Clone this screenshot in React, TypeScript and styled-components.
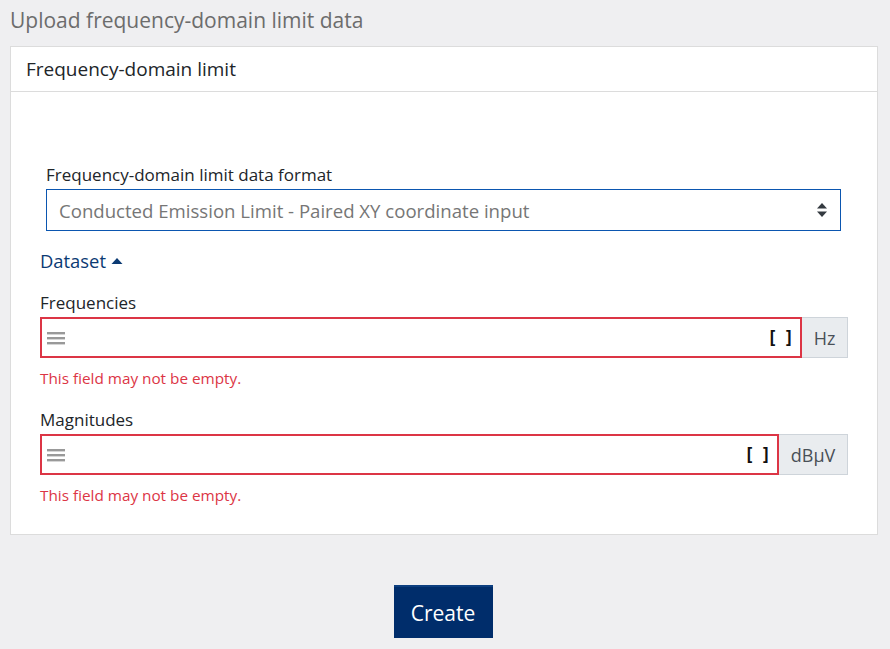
import React from 'react';
import styled, { createGlobalStyle } from 'styled-components';

const GlobalStyle = createGlobalStyle`
  html, body {
    margin: 0;
    padding: 0;
    background: #efeff1;
    font-family: 'Open Sans', 'Noto Sans', sans-serif;
    color: #212529;
  }
  * {
    box-sizing: border-box;
  }
`;

type FieldProps = {
  label: string;
  unit: string;
  unitWidth: number;
};

const Page = () => {
  return (
    <StyledPage>
      <GlobalStyle />
      <StyledTitle>Upload frequency-domain limit data</StyledTitle>
      <StyledCard>
        <StyledCardHeader>Frequency-domain limit</StyledCardHeader>
        <StyledCardBody>
          <StyledSelectGroup>
            <StyledLabel>Frequency-domain limit data format</StyledLabel>
            <StyledSelect>
              <span>Conducted Emission Limit - Paired XY coordinate input</span>
              <svg width="12" height="16" viewBox="0 0 12 16">
                <path d="M6 1 L11 6.5 H1 Z" fill="#343a40" />
                <path d="M6 15 L11 9.5 H1 Z" fill="#343a40" />
              </svg>
            </StyledSelect>
          </StyledSelectGroup>
          <StyledToggle>
            Dataset
            <svg width="12" height="8" viewBox="0 0 12 8">
              <path d="M6 1 L11.5 7 H0.5 Z" fill="#0b3a73" />
            </svg>
          </StyledToggle>
          <Field label="Frequencies" unit="Hz" unitWidth={46} />
          <Field label="Magnitudes" unit="dBµV" unitWidth={69} />
        </StyledCardBody>
      </StyledCard>
      <StyledFooter>
        <StyledButton>Create</StyledButton>
      </StyledFooter>
    </StyledPage>
  );
};

const Field = ({ label, unit, unitWidth }: FieldProps) => (
  <StyledField>
    <StyledLabel>{label}</StyledLabel>
    <StyledInputGroup>
      <StyledInput>
        <svg width="18" height="14" viewBox="0 0 18 14">
          <rect x="0" y="1" width="18" height="2.4" fill="#999" />
          <rect x="0" y="6" width="18" height="2.4" fill="#999" />
          <rect x="0" y="11" width="18" height="2.4" fill="#999" />
        </svg>
        <StyledBrackets>[ ]</StyledBrackets>
      </StyledInput>
      <StyledAddon width={unitWidth}>{unit}</StyledAddon>
    </StyledInputGroup>
    <StyledError>This field may not be empty.</StyledError>
  </StyledField>
);

export default function App() {
  return <Page />;
}

const StyledPage = styled.div`
  width: 890px;
  height: 649px;
  padding: 5px 12px 0 10px;
  overflow: hidden;
`;

const StyledTitle = styled.h1`
  margin: 0;
  height: 41px;
  font-size: 21px;
  font-weight: 400;
  color: #6c6c6c;
  line-height: 30px;
`;

const StyledCard = styled.div`
  background: #fff;
  border: 1px solid #dcdcdc;
`;

const StyledCardHeader = styled.div`
  height: 45px;
  padding: 0 15px;
  display: flex;
  align-items: center;
  font-size: 19px;
  border-bottom: 1px solid #dcdcdc;
`;

const StyledCardBody = styled.div`
  padding: 71px 29px 28px 29px;
`;

const StyledSelectGroup = styled.div`
  padding: 0 7px 0 6px;
`;

const StyledLabel = styled.div`
  font-size: 17px;
  line-height: 24px;
  margin-bottom: 2px;
`;

const StyledSelect = styled.div`
  height: 42px;
  margin-top: 1px;
  border: 1px solid #0b56b0;
  display: flex;
  align-items: center;
  justify-content: space-between;
  padding: 0 12px 0 12px;
  font-size: 18.6px;
  color: #767676;
`;

const StyledToggle = styled.div`
  margin-top: 17px;
  display: flex;
  align-items: center;
  gap: 5px;
  color: #0b3a73;
  font-size: 18.4px;
  line-height: 26px;
`;

const StyledField = styled.div`
  margin-top: 17px;
  & + & {
    margin-top: 19px;
  }
`;

const StyledInputGroup = styled.div`
  display: flex;
  height: 41px;
`;

const StyledInput = styled.div`
  flex: 1;
  border: 2px solid #dc3545;
  display: flex;
  align-items: center;
  justify-content: space-between;
  padding: 0 8px 0 5px;
`;

const StyledBrackets = styled.span`
  font-family: 'DejaVu Sans Mono', monospace;
  font-weight: 700;
  font-size: 17px;
  letter-spacing: -2px;
  color: #111;
`;

const StyledAddon = styled.div<{ width: number }>`
  width: ${(p) => p.width}px;
  background: #e9ecef;
  border: 1px solid #ced4da;
  border-left: none;
  display: flex;
  align-items: center;
  justify-content: center;
  font-size: 18px;
  color: #495057;
`;

const StyledError = styled.div`
  margin-top: 9px;
  color: #dc3545;
  font-size: 15.3px;
  line-height: 22px;
`;

const StyledFooter = styled.div`
  display: flex;
  justify-content: center;
  padding-top: 50px;
  padding-right: 2px;
`;

const StyledButton = styled.button`
  width: 99px;
  height: 53px;
  background: #002d6b;
  border: none;
  border-top: 2px solid #0d3f80;
  color: #fff;
  font-family: 'Open Sans', 'Noto Sans', sans-serif;
  font-size: 21px;
`;
